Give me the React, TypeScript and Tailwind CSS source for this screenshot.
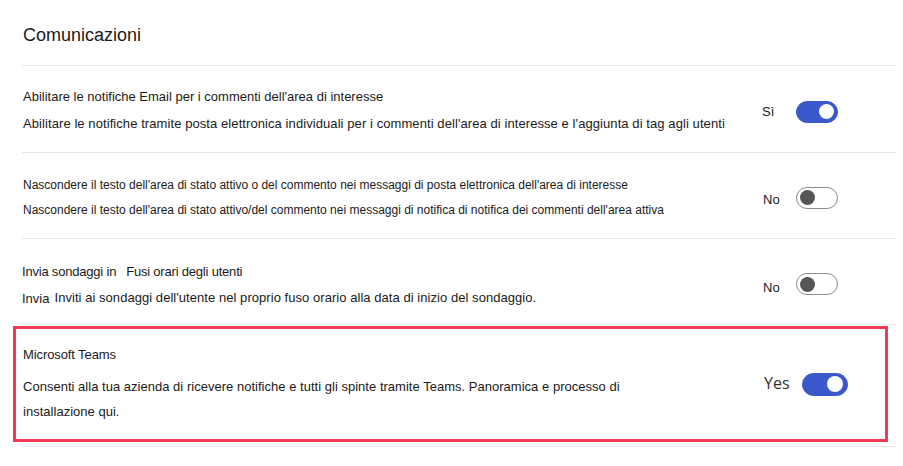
import { useState } from "react"

interface Setting {
  id: string
  title: string
  description: string
  on: boolean
}

function Toggle({ on, onClick, large }: { on: boolean; onClick: () => void; large?: boolean }) {
  return (
    <button
      aria-label="Toggle"
      onClick={onClick}
      className={`shrink-0 flex items-center rounded-full border ${large ? "w-[46px] h-[23px] px-[4px]" : "w-[42px] h-[22px] px-[3px]"} ${
        on ? "bg-[#3a58c9] border-[#3a58c9] justify-end" : "bg-white border-[#8a8a8a] justify-start"
      }`}
    >
      <span
        className={`rounded-full ${large ? "w-[16px] h-[16px]" : "w-[15px] h-[15px]"} ${on ? "bg-white" : "bg-[#555555]"}`}
      />
    </button>
  )
}

export default function App() {
  const [settings, setSettings] = useState<Setting[]>([
    {
      id: "email",
      title: "Abilitare le notifiche Email per i commenti dell'area di interesse",
      description:
        "Abilitare le notifiche tramite posta elettronica individuali per i commenti dell'area di interesse e l'aggiunta di tag agli utenti",
      on: true,
    },
    {
      id: "hide",
      title:
        "Nascondere il testo dell'area di stato attivo o del commento nei messaggi di posta elettronica dell'area di interesse",
      description:
        "Nascondere il testo dell'area di stato attivo/del commento nei messaggi di notifica di notifica dei commenti dell'area attiva",
      on: false,
    },
    { id: "surveys", title: "Invia sondaggi in", description: "", on: false },
  ])
  const [teams, setTeams] = useState(true)

  const flip = (id: string) =>
    setSettings((s) => s.map((x) => (x.id === id ? { ...x, on: !x.on } : x)))

  return (
    <div className="w-[903px] h-[466px] bg-white text-[#1b1a19] font-['Liberation_Sans',Arial,sans-serif] overflow-hidden">
      <div className="pl-[22px] pr-[7px]">
        {/* Header */}
        <div className="h-[66px] border-b border-[#e6e6e6] pt-[23px]">
          <h1 className="text-[18px] leading-[24px] pl-[1px]">Comunicazioni</h1>
        </div>

        {/* Row 1 */}
        <div className="h-[87px] flex items-center border-b border-[#e6e6e6] pl-[1px] pt-[2px]">
          <div className="flex-1 flex flex-col gap-[10px] text-[13px] leading-[17px]">
            <p>{settings[0].title}</p>
            <p className="tracking-[0.08px]">{settings[0].description}</p>
          </div>
          <div className="shrink-0 flex items-center mr-[58px] mt-[3px]">
            <span className="w-[34px] text-[13px]">{settings[0].on ? "Sì" : "No"}</span>
            <Toggle on={settings[0].on} onClick={() => flip("email")} />
          </div>
        </div>

        {/* Row 2 */}
        <div className="h-[86px] flex items-center border-b border-[#e6e6e6] pl-[1px] pt-[4px]">
          <div className="flex-1 flex flex-col gap-[9px] text-[12px] leading-[16px]">
            <p>{settings[1].title}</p>
            <p>{settings[1].description}</p>
          </div>
          <div className="shrink-0 flex items-center mr-[58px]">
            <span className="w-[33px] text-[13px] mt-[4px]">{settings[1].on ? "Sì" : "No"}</span>
            <Toggle on={settings[1].on} onClick={() => flip("hide")} />
          </div>
        </div>

        {/* Row 3 */}
        <div className="h-[86px] flex items-center border-b border-[#e6e6e6] pt-[5px]">
          <div className="flex-1 flex flex-col gap-[9px] text-[13px] leading-[17px]">
            <p>
              <span className="tracking-[-0.2px]">Invia sondaggi in</span>
              <span className="ml-[10px] tracking-[-0.2px]">Fusi orari degli utenti</span>
            </p>
            <p>
              <span className="inline-block translate-y-[1px]">Invia</span>
              <span className="ml-[5px] tracking-[0.05px]">
                Inviti ai sondaggi dell'utente nel proprio fuso orario alla data di inizio del sondaggio.
              </span>
            </p>
          </div>
          <div className="shrink-0 flex items-center mr-[58px]">
            <span className="w-[33px] text-[13px] mt-[8px]">{settings[2].on ? "Sì" : "No"}</span>
            <Toggle on={settings[2].on} onClick={() => flip("surveys")} />
          </div>
        </div>

        {/* Microsoft Teams row, highlighted */}
        <div className="border-b border-[#e6e6e6] pb-[4px] pt-[1px]">
          <div className="-ml-[9px] w-[875px] h-[116px] border-[3px] border-[#ef3a52] flex items-center pl-[7px]">
            <div className="flex-1 flex flex-col text-[13px] leading-[17px] pt-[2px]">
              <p className="tracking-[-0.1px]">Microsoft Teams</p>
              <p className="mt-[11px] w-[600px] leading-[25px] tracking-[0.02px]">
                Consenti alla tua azienda di ricevere notifiche e tutti gli spinte tramite Teams. Panoramica e processo di installazione qui.
              </p>
            </div>
            <div className="shrink-0 flex items-center mr-[37px]">
              <span className="w-[38px] text-[16px] text-[#323130] font-['Open_Sans',sans-serif] -mt-[2px]">
                {teams ? "Yes" : "No"}
              </span>
              <Toggle large on={teams} onClick={() => setTeams(!teams)} />
            </div>
          </div>
        </div>
      </div>
    </div>
  )
}
